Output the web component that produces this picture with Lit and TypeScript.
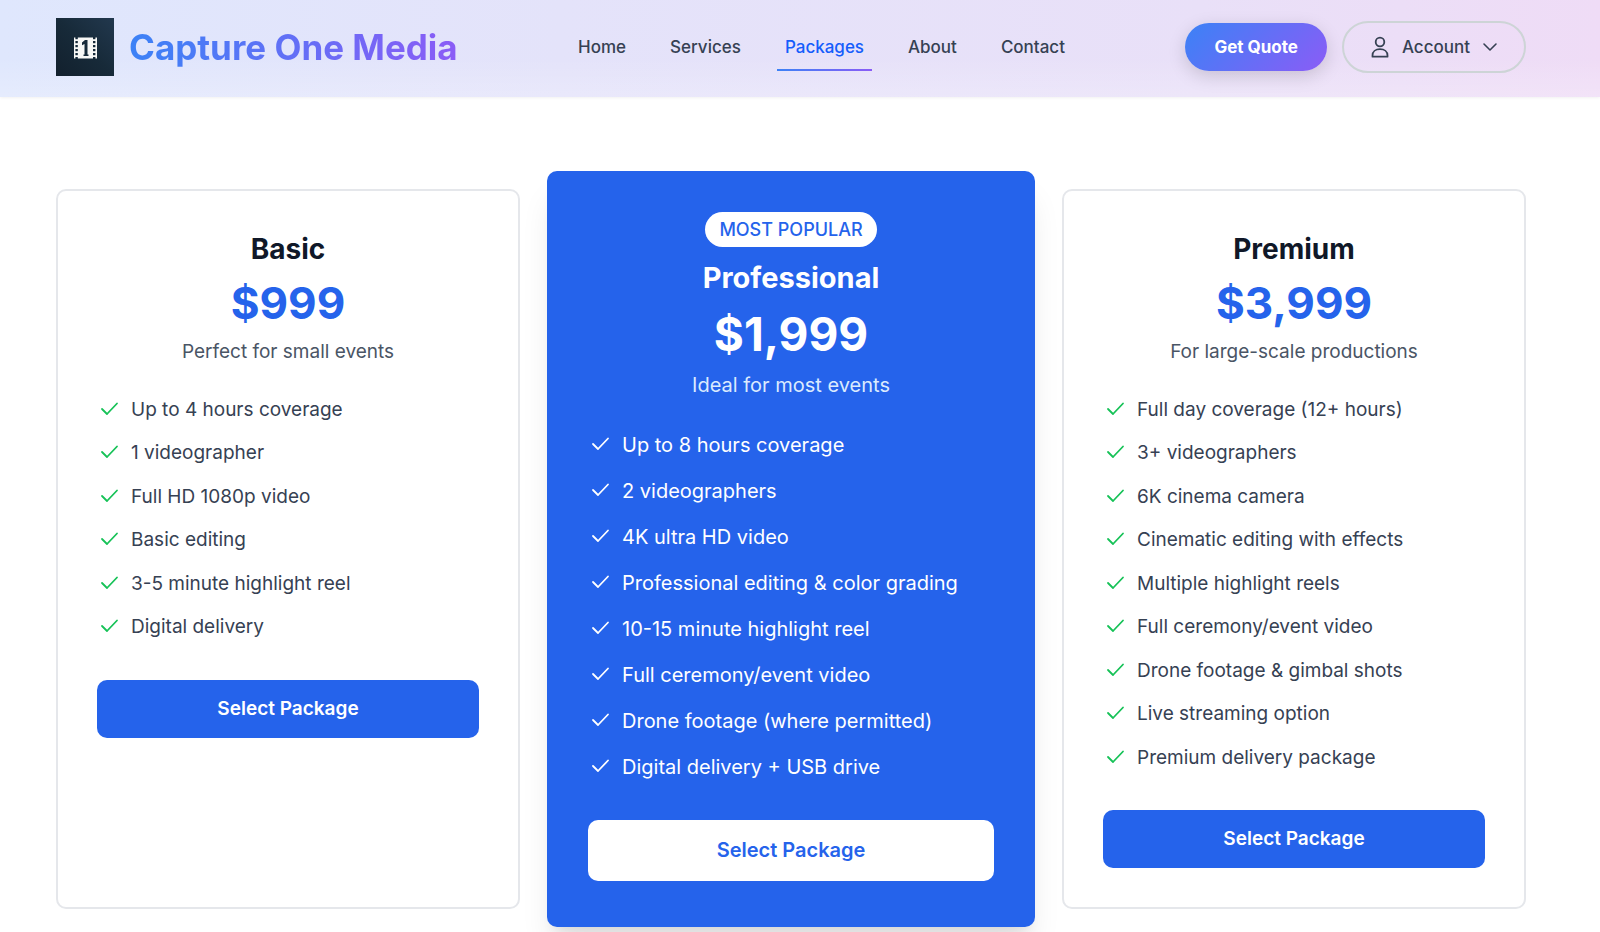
import { LitElement, html, css, svg, nothing } from "lit";
import { customElement, property } from "lit/decorators.js";

interface Plan {
  name: string;
  price: string;
  note: string;
  features: string[];
  featured?: boolean;
}

const PLANS: Plan[] = [
  {
    name: "Basic",
    price: "$999",
    note: "Perfect for small events",
    features: [
      "Up to 4 hours coverage",
      "1 videographer",
      "Full HD 1080p video",
      "Basic editing",
      "3-5 minute highlight reel",
      "Digital delivery",
    ],
  },
  {
    name: "Professional",
    price: "$1,999",
    note: "Ideal for most events",
    featured: true,
    features: [
      "Up to 8 hours coverage",
      "2 videographers",
      "4K ultra HD video",
      "Professional editing & color grading",
      "10-15 minute highlight reel",
      "Full ceremony/event video",
      "Drone footage (where permitted)",
      "Digital delivery + USB drive",
    ],
  },
  {
    name: "Premium",
    price: "$3,999",
    note: "For large-scale productions",
    features: [
      "Full day coverage (12+ hours)",
      "3+ videographers",
      "6K cinema camera",
      "Cinematic editing with effects",
      "Multiple highlight reels",
      "Full ceremony/event video",
      "Drone footage & gimbal shots",
      "Live streaming option",
      "Premium delivery package",
    ],
  },
];

const LINKS = ["Home", "Services", "Packages", "About", "Contact"];

@customElement("site-header")
export class SiteHeader extends LitElement {
  @property() current = "Packages";

  static styles = css`
    :host {
      display: block;
    }
    .bar {
      display: flex;
      align-items: center;
      justify-content: space-between;
      box-sizing: border-box;
      min-height: 97px;
      padding: 0 74px 3px 56px;
      background:
        linear-gradient(to bottom, rgba(255, 255, 255, 0) 60%, rgba(255, 255, 255, 0.2)),
        linear-gradient(to right, #dfe7fd, #e4e3fa 35%, #e9e0f8 75%, #efdcf6);
      box-shadow: 0 1px 3px rgba(0, 0, 0, 0.06);
    }
    .brand {
      display: flex;
      align-items: center;
      gap: 15px;
      text-decoration: none;
    }
    .logo {
      display: block;
      width: 58px;
      height: 58px;
    }
    .name {
      font-size: 35px;
      line-height: 44px;
      font-weight: 700;
      color: transparent;
      background: linear-gradient(to right, #3b82f6, #8b5cf6);
      -webkit-background-clip: text;
      background-clip: text;
    }
    .nav {
      display: flex;
      gap: 28px;
    }
    .link {
      padding: 12px 8px 10px;
      border-bottom: 2px solid transparent;
      font-size: 17px;
      line-height: 24px;
      font-weight: 500;
      color: #364153;
      text-decoration: none;
    }
    .link.active {
      color: #155dfc;
      border-image: linear-gradient(to right, #3b82f6, #8b5cf6) 1;
    }
    .actions {
      display: flex;
      align-items: center;
      gap: 15px;
    }
    button {
      font: inherit;
      font-size: 17px;
      line-height: 24px;
      cursor: pointer;
    }
    .quote {
      padding: 12px 29px;
      border: 0;
      border-radius: 24px;
      font-weight: 700;
      color: #fff;
      background: linear-gradient(135deg, #3b82f6, #8b5cf6);
      box-shadow: 0 5px 18px rgba(0, 0, 0, 0.15);
    }
    .account {
      display: flex;
      align-items: center;
      gap: 12px;
      padding: 12px 26px;
      border: 2px solid #cdd4d6;
      border-radius: 26px;
      font-weight: 500;
      color: #364153;
      background: transparent;
    }
    .user {
      width: 20px;
      height: 22px;
    }
    .chevron {
      width: 16px;
      height: 16px;
    }
  `;

  render() {
    return html`
      <header class="bar">
        <a class="brand" href="#home">
          <svg class="logo" viewBox="0 0 58 58" aria-hidden="true">
            <defs>
              <linearGradient id="tile" x1="0" y1="1" x2="1" y2="0">
                <stop offset="0" stop-color="#12202d" />
                <stop offset="0.5" stop-color="#172a39" />
                <stop offset="1" stop-color="#22384e" />
              </linearGradient>
            </defs>
            <rect width="58" height="58" fill="url(#tile)" />
            <rect x="18" y="19.500" width="23" height="21" fill="#f8f8f6" />
            ${[19, 23, 27, 31, 35, 39].map(
              (y) => svg`
                <rect x="19.400" y=${y} width="2.400" height="2.200" fill="#172a39" />
                <rect x="37" y=${y} width="2.400" height="2.200" fill="#172a39" />`
            )}
            <path d="M26 24.500L29 22H31.500V36.500H32.500V38H27.500V36.500H28.500V26L26 27.200Z" fill="#172a39" />
          </svg>
          <span class="name">Capture One Media</span>
        </a>
        <nav class="nav" aria-label="Main">
          ${LINKS.map(
            (l) => html`<a
              class="link ${l === this.current ? "active" : ""}"
              href="#${l.toLowerCase()}"
              aria-current=${l === this.current ? "page" : nothing}
              >${l}</a
            >`
          )}
        </nav>
        <div class="actions">
          <button class="quote" type="button">Get Quote</button>
          <button class="account" type="button" aria-haspopup="true">
            <svg class="user" viewBox="0 0 20 22" fill="none" stroke="currentColor" stroke-width="1.800" stroke-linejoin="round" aria-hidden="true">
              <circle cx="10" cy="6" r="4.300" />
              <path d="M2.500 20.700V19.500C2.500 15.800 5.600 13.200 10 13.200S17.500 15.800 17.500 19.500V20.700Z" />
            </svg>
            <span>Account</span>
            <svg class="chevron" viewBox="0 0 16 16" fill="none" stroke="currentColor" stroke-width="1.600" stroke-linecap="round" stroke-linejoin="round" aria-hidden="true">
              <path d="M2 5L8 11L14 5" />
            </svg>
          </button>
        </div>
      </header>
    `;
  }
}

@customElement("plan-card")
export class PlanCard extends LitElement {
  @property({ attribute: false }) plan!: Plan;
  @property({ type: Boolean, reflect: true }) featured = false;

  static styles = css`
    :host {
      display: block;
      box-sizing: border-box;
      padding: 39px;
      border: 2px solid #e5e7eb;
      border-radius: 10px;
      background: #fff;
      color: #364153;
      font-size: 19px;
      line-height: 1.5;
    }
    .head {
      display: flex;
      flex-direction: column;
      align-items: center;
      gap: 10px;
      margin-bottom: 29px;
      text-align: center;
    }
    .title,
    .price,
    .note {
      margin: 0;
    }
    .title {
      font-size: 28px;
      line-height: 39px;
      font-weight: 700;
      color: #101828;
    }
    .price {
      font-size: 44px;
      line-height: 49px;
      font-weight: 700;
      color: #2563eb;
    }
    .note {
      color: #4a5565;
    }
    .list {
      display: flex;
      flex-direction: column;
      gap: 15px;
      margin: 0 0 38px;
      padding: 0;
      list-style: none;
    }
    .item {
      display: flex;
      align-items: center;
      gap: 10px;
    }
    .check {
      flex: none;
      width: 24px;
      height: 24px;
      color: #16c257;
    }
    .select {
      display: block;
      width: 100%;
      padding: 15px;
      border: 0;
      border-radius: 10px;
      font: inherit;
      line-height: 28px;
      font-weight: 600;
      color: #fff;
      background: #2563eb;
      cursor: pointer;
    }
    .badge {
      padding: 5px 14px;
      border-radius: 18px;
      font-size: 18px;
      line-height: 25px;
      font-weight: 500;
      color: #2563eb;
      background: #fff;
    }
    :host([featured]) {
      margin: -18px -12px;
      padding: 41px;
      border: 0;
      background: #2563eb;
      color: #fff;
      font-size: 20px;
      box-shadow:
        0 25px 32px -6px rgba(0, 0, 0, 0.1),
        0 10px 13px -8px rgba(0, 0, 0, 0.1);
    }
    :host([featured]) .head {
      margin-bottom: 30px;
    }
    :host([featured]) .title {
      font-size: 29px;
      line-height: 42px;
      color: #fff;
    }
    :host([featured]) .price {
      font-size: 46px;
      line-height: 51px;
      color: #fff;
    }
    :host([featured]) .note {
      color: #dbeafe;
    }
    :host([featured]) .list {
      gap: 16px;
    }
    :host([featured]) .check {
      color: #fff;
    }
    :host([featured]) .select {
      padding: 16px;
      line-height: 29px;
      color: #2563eb;
      background: #fff;
    }
  `;

  render() {
    const p = this.plan;
    return html`
      <div class="head">
        ${p.featured ? html`<span class="badge">MOST POPULAR</span>` : nothing}
        <h3 class="title">${p.name}</h3>
        <p class="price">${p.price}</p>
        <p class="note">${p.note}</p>
      </div>
      <ul class="list">
        ${p.features.map(
          (f) => html`<li class="item">
            <svg class="check" viewBox="0 0 24 24" fill="none" stroke="currentColor" stroke-width="1.800" stroke-linecap="round" stroke-linejoin="round" aria-hidden="true">
              <path d="M5 11L10 16L20 5.500" />
            </svg>
            <span>${f}</span>
          </li>`
        )}
      </ul>
      <button class="select" type="button">Select Package</button>
    `;
  }
}

@customElement("app-root")
export class AppRoot extends LitElement {
  static styles = css`
    :host {
      display: block;
      min-height: 100vh;
      background: #fff;
      font-family: Inter, "Liberation Sans", sans-serif;
    }
    .plans {
      display: grid;
      grid-template-columns: repeat(3, minmax(0, 1fr));
      gap: 39px;
      padding: 92px 74px 24px 56px;
    }
  `;

  render() {
    return html`
      <site-header></site-header>
      <main class="plans">
        ${PLANS.map((p) => html`<plan-card .plan=${p} ?featured=${!!p.featured}></plan-card>`)}
      </main>
    `;
  }
}
